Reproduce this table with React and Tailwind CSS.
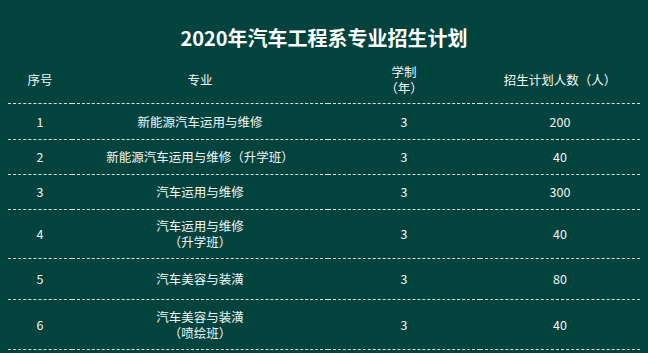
import React from "react";

const rows = [
  { no: "1", major: ["新能源汽车运用与维修"], years: "3", count: "200", h: "h-[36px]" },
  { no: "2", major: ["新能源汽车运用与维修（升学班）"], years: "3", count: "40", h: "h-[35px]" },
  { no: "3", major: ["汽车运用与维修"], years: "3", count: "300", h: "h-[35px]" },
  { no: "4", major: ["汽车运用与维修", "（升学班）"], years: "3", count: "40", h: "h-[49px]" },
  { no: "5", major: ["汽车美容与装潢"], years: "3", count: "80", h: "h-[41px]" },
  { no: "6", major: ["汽车美容与装潢", "（喷绘班）"], years: "3", count: "40", h: "h-[50px]" },
];

const cell =
  "flex flex-col items-center justify-center text-center border-b border-dashed border-[#d8e2df]";

const Row = ({ h, cols }) => (
  <div className={`grid grid-cols-[64px_256px_152px_160px] ${h}`}>
    {cols.map((c, i) => (
      <div key={i} className={cell}>
        {c}
      </div>
    ))}
  </div>
);

const App = () => {
  return (
    <div
      className="w-[648px] h-[353px] overflow-hidden bg-[#02433e] text-[#f4f8f6]"
      style={{ fontFamily: '"Noto Sans CJK SC", "Noto Sans", sans-serif' }}
    >
      <h1 className="pt-[24px] h-[56px] text-center text-[20px] font-bold leading-[28px] text-white">
        2020年汽车工程系专业招生计划
      </h1>
      <div className="mx-2 text-[12.5px] leading-[16px]">
        <Row
          h="h-[48px]"
          cols={[
            "序号",
            "专业",
            <>
              <span>学制</span>
              <span>（年）</span>
            </>,
            "招生计划人数（人）",
          ]}
        />
        {rows.map((r) => (
          <Row
            key={r.no}
            h={r.h}
            cols={[
              r.no,
              r.major.map((m) => <span key={m}>{m}</span>),
              r.years,
              r.count,
            ]}
          />
        ))}
      </div>
    </div>
  );
};

export default App;
